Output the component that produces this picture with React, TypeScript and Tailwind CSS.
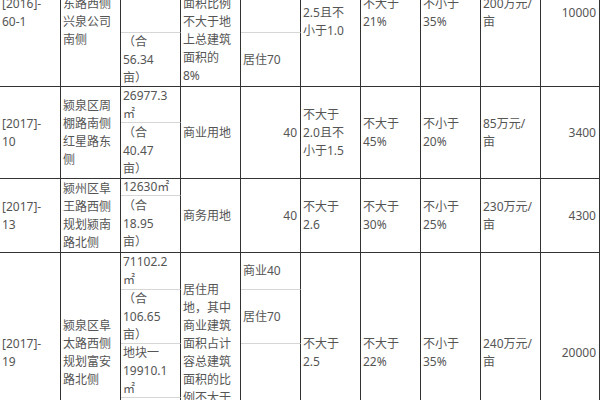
import React from "react";

type Cell = {
  pos: string;
  lines: string[];
  light?: boolean;
  right?: boolean;
  top?: boolean;
};

const cells: Cell[] = [
  // group 1 (tracks 1-2)
  { pos: "col-start-1 row-start-1 row-span-2", lines: ["[2016]-", "60-1"] },
  { pos: "col-start-2 row-start-1 row-span-2", lines: ["颍泉区颍", "东路西侧", "兴泉公司", "南侧"] },
  { pos: "col-start-3 row-start-1", lines: ["15026.7", "㎡"], light: true, top: true },
  { pos: "col-start-3 row-start-2", lines: ["（合", "56.34", "亩）"] },
  {
    pos: "col-start-4 row-start-1 row-span-2",
    lines: ["居住用", "地，其中", "商业建筑", "面积比例", "不大于地", "上总建筑", "面积的", "8%"],
  },
  { pos: "col-start-5 row-start-1", lines: ["商业40"], light: true },
  { pos: "col-start-5 row-start-2", lines: ["居住70"] },
  { pos: "col-start-6 row-start-1 row-span-2", lines: ["不大于", "2.5且不", "小于1.0"] },
  { pos: "col-start-7 row-start-1 row-span-2", lines: ["不大于", "21%"] },
  { pos: "col-start-8 row-start-1 row-span-2", lines: ["不小于", "35%"] },
  { pos: "col-start-9 row-start-1 row-span-2", lines: ["200万元/", "亩"] },
  { pos: "col-start-10 row-start-1 row-span-2", lines: ["10000"], right: true },

  // group 2 (tracks 3-4)
  { pos: "col-start-1 row-start-3 row-span-2", lines: ["[2017]-", "10"] },
  { pos: "col-start-2 row-start-3 row-span-2", lines: ["颍泉区周", "棚路南侧", "红星路东", "侧"] },
  { pos: "col-start-3 row-start-3", lines: ["26977.3", "㎡"], light: true },
  { pos: "col-start-3 row-start-4", lines: ["（合", "40.47", "亩）"] },
  { pos: "col-start-4 row-start-3 row-span-2", lines: ["商业用地"] },
  { pos: "col-start-5 row-start-3 row-span-2", lines: ["40"], right: true },
  { pos: "col-start-6 row-start-3 row-span-2", lines: ["不大于", "2.0且不", "小于1.5"] },
  { pos: "col-start-7 row-start-3 row-span-2", lines: ["不大于", "45%"] },
  { pos: "col-start-8 row-start-3 row-span-2", lines: ["不小于", "20%"] },
  { pos: "col-start-9 row-start-3 row-span-2", lines: ["85万元/", "亩"] },
  { pos: "col-start-10 row-start-3 row-span-2", lines: ["3400"], right: true },

  // group 3 (tracks 5-6)
  { pos: "col-start-1 row-start-5 row-span-2", lines: ["[2017]-", "13"] },
  { pos: "col-start-2 row-start-5 row-span-2", lines: ["颍州区阜", "王路西侧", "规划颍南", "路北侧"] },
  { pos: "col-start-3 row-start-5", lines: ["12630㎡"], light: true },
  { pos: "col-start-3 row-start-6", lines: ["（合", "18.95", "亩）"] },
  { pos: "col-start-4 row-start-5 row-span-2", lines: ["商务用地"] },
  { pos: "col-start-5 row-start-5 row-span-2", lines: ["40"], right: true },
  { pos: "col-start-6 row-start-5 row-span-2", lines: ["不大于", "2.6"] },
  { pos: "col-start-7 row-start-5 row-span-2", lines: ["不大于", "30%"] },
  { pos: "col-start-8 row-start-5 row-span-2", lines: ["不小于", "25%"] },
  { pos: "col-start-9 row-start-5 row-span-2", lines: ["230万元/", "亩"] },
  { pos: "col-start-10 row-start-5 row-span-2", lines: ["4300"], right: true },

  // group 4 (tracks 7-10)
  { pos: "col-start-1 row-start-7 row-span-4", lines: ["[2017]-", "19"] },
  { pos: "col-start-2 row-start-7 row-span-4", lines: ["颍泉区阜", "太路西侧", "规划富安", "路北侧"] },
  { pos: "col-start-3 row-start-7", lines: ["71102.2", "㎡"], light: true },
  { pos: "col-start-3 row-start-8", lines: ["（合", "106.65", "亩）"], light: true },
  { pos: "col-start-3 row-start-9", lines: ["地块一", "19910.1", "㎡"], light: true },
  { pos: "col-start-3 row-start-10", lines: ["（合", "29.87", "亩）"] },
  {
    pos: "col-start-4 row-start-7 row-span-4",
    lines: ["居住用", "地，其中", "商业建筑", "面积占计", "容总建筑", "面积的比", "例不大于", "10%"],
  },
  { pos: "col-start-5 row-start-7", lines: ["商业40"], light: true },
  { pos: "col-start-5 row-start-8", lines: ["居住70"], light: true },
  { pos: "col-start-5 row-start-9 row-span-2", lines: [] },
  { pos: "col-start-6 row-start-7 row-span-4", lines: ["不大于", "2.5"] },
  { pos: "col-start-7 row-start-7 row-span-4", lines: ["不大于", "22%"] },
  { pos: "col-start-8 row-start-7 row-span-4", lines: ["不小于", "35%"] },
  { pos: "col-start-9 row-start-7 row-span-4", lines: ["240万元/", "亩"] },
  { pos: "col-start-10 row-start-7 row-span-4", lines: ["20000"], right: true },
];

function TableCell({ cell }: { cell: Cell }) {
  const align = cell.top ? "items-start" : "items-center";
  const justify = cell.right ? "justify-end pr-[3px]" : "justify-start pl-[2px]";
  const bottom = cell.light ? "border-b-[#d6d6d6]" : "border-b-[#333333]";
  return (
    <div
      className={`${cell.pos} flex ${align} ${justify} ${bottom} border-r border-b border-r-[#333333] overflow-hidden`}
    >
      <div className={cell.right ? "text-right" : "text-left"}>
        {cell.lines.map((l, i) => (
          <div key={i} className="whitespace-nowrap">
            {l}
          </div>
        ))}
      </div>
    </div>
  );
}

export default function App() {
  return (
    <div className="w-[600px] h-[400px] overflow-hidden bg-white">
      <div className="grid -mt-[60px] grid-cols-[61px_repeat(8,60px)_59px] grid-rows-[93px_54px_36px_56px_17px_57px_37px_54px_54px_55px] text-[12px] leading-[18px] text-[#555555] [font-family:'Noto_Sans','Noto_Sans_CJK_SC',sans-serif]">
        {cells.map((c, i) => (
          <TableCell key={i} cell={c} />
        ))}
      </div>
    </div>
  );
}
